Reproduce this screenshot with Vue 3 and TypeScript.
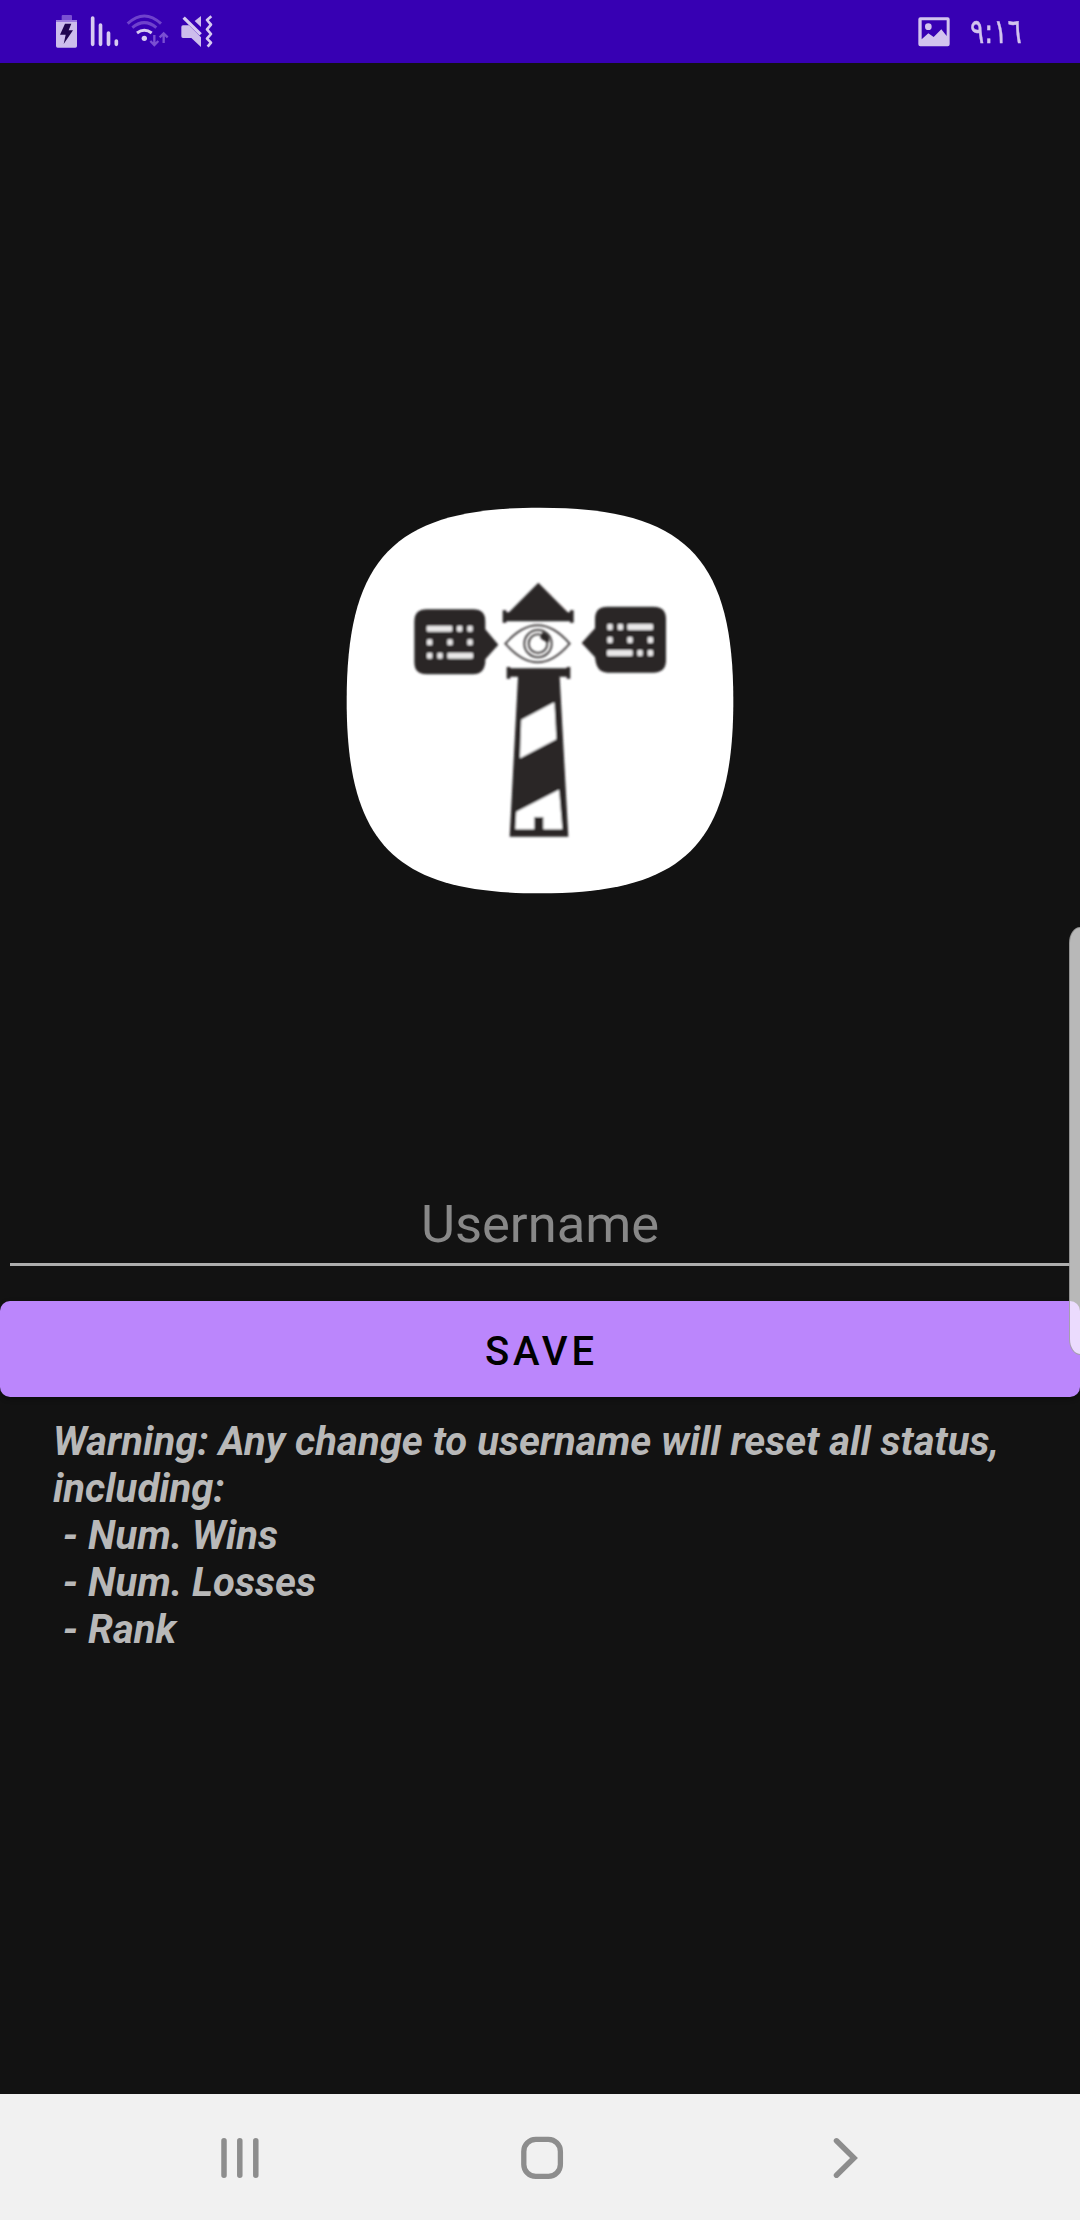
<script setup lang="ts">
const time: string = '٩:١٦'
const hint: string = 'Username'
const saveLabel: string = 'Save'
const warning: string[] = [
  'Warning: Any change to username will reset all status,',
  'including:',
  ' - Num. Wins',
  ' - Num. Losses',
  ' - Rank',
]

interface Mark { x: number; y: number; w: number }
const leftMarks: Mark[] = [
  { x: 275, y: 392, w: 77 }, { x: 366, y: 392, w: 16 }, { x: 397, y: 392, w: 16 },
  { x: 276, y: 433, w: 16 }, { x: 337, y: 433, w: 16 }, { x: 397, y: 433, w: 16 },
  { x: 276, y: 473, w: 16 }, { x: 307, y: 473, w: 16 }, { x: 337, y: 473, w: 77 },
]
const rightMarks: Mark[] = [
  { x: 817, y: 387, w: 16 }, { x: 848, y: 387, w: 16 }, { x: 877, y: 387, w: 77 },
  { x: 817, y: 426, w: 16 }, { x: 877, y: 426, w: 16 }, { x: 938, y: 426, w: 16 },
  { x: 816, y: 465, w: 77 }, { x: 907, y: 465, w: 16 }, { x: 938, y: 465, w: 16 },
]
</script>

<template>
  <div class="screen">
    <header class="status">
      <svg class="status-left" viewBox="0 0 570 189" width="190" height="63">
        <rect x="65" y="45" width="31" height="18" rx="3" fill="#7a4fd2" />
        <rect x="48" y="60" width="63" height="6" fill="#9b7bde" />
        <path d="M48 66h63v72q0 5-5 5H53q-5 0-5-5z" fill="#cdbdec" />
        <path d="M75 71h19l-8 20h13l-28 41 6-28H60z" fill="#21064f" />
        <g stroke="#d7caf1" stroke-width="11" stroke-linecap="round">
          <path d="M158 54v79M181.500 75v58M205.500 99v34M229 123v10" />
        </g>
        <g fill="none" stroke-width="9" stroke-linecap="butt">
          <path d="M263 71Q313 25 363 71" stroke="#6f42cc" />
          <path d="M277 83Q313 53 349 83" stroke="#6f42cc" />
          <path d="M291 99Q313 82 335 99" stroke="#d7caf1" />
        </g>
        <circle cx="313" cy="115" r="8" fill="#d7caf1" />
        <g fill="none" stroke="#7a4fd2" stroke-width="7">
          <path d="M343 105v29M331 123l12 12 12-12M371 129v-28M359 112l12-12 12 12" />
        </g>
        <path d="M424 81q0-5 5-5h18l36 36v29l-29-27h-25q-5 0-5-5z" fill="#cdbdec" />
        <path d="M431 53l51 50" stroke="#d7caf1" stroke-width="10" />
        <path d="M483 48v33l-19-18z" fill="#cdbdec" />
        <path d="M514 49l-13 11 12 14-12 14 12 14-12 14 12 12-10 12" fill="none" stroke="#d7caf1" stroke-width="8" stroke-linejoin="round" />
      </svg>
      <div class="status-right">
        <svg viewBox="0 0 96 90" width="32" height="30">
          <path fill-rule="evenodd" d="M7 1h82q6 0 6 6v75q0 6-6 6H7q-6 0-6-6V7q0-6 6-6zM11 10v57l20-18 16 11 23-23 16 20V10z" fill="#d2c3ee" />
          <circle cx="31" cy="29" r="10" fill="#d2c3ee" />
        </svg>
        <span class="time">{{ time }}</span>
      </div>
    </header>

    <main class="content">
      <svg class="logo" viewBox="0 0 1230 1230" width="410" height="410">
        <defs>
          <filter id="soft" x="-5%" y="-5%" width="110%" height="110%">
            <feGaussianBlur stdDeviation="3.2" />
          </filter>
        </defs>
        <path d="M615 38C1048 38 1195 185 1195 617C1195 1048 1048 1195 615 1195C182 1195 35 1048 35 617C35 185 182 38 615 38Z" fill="#fff" />
        <g filter="url(#soft)" fill="#292526">
          <path d="M610 263L698 352H705V346H716V383H705V379H514V383H503V346H514V352H522Z" />
          <path d="M515 516H526V520H695V516H706V551H695V545H674L700 1025H524L549 545H526V551H515Z" />
          <path d="M559 674L658 622L664 733L555 790Z" fill="#fff" />
          <path d="M544 950L672 884L682 1003H625V966H598V1003H541Z" fill="#fff" />
          <path d="M275 343H415Q451 343 451 379V403L490 449L451 493V502Q447 538 415 538H275Q238 538 238 502V379Q238 343 275 343Z" />
          <path d="M817 335H955Q993 335 993 372V496Q993 533 955 533H817Q784 533 780 487L740 444L780 400V372Q780 335 817 335Z" />
          <g fill="#e9e7e8">
            <rect v-for="(m, i) in leftMarks" :key="'l' + i" :x="m.x" :y="m.y" :width="m.w" height="18" rx="4" />
            <rect v-for="(m, i) in rightMarks" :key="'r' + i" :x="m.x" :y="m.y" :width="m.w" height="18" rx="4" />
          </g>
          <g fill="none" stroke="#4a4647" stroke-width="6">
            <path d="M511 446Q560 391 608 391Q656 391 704 446Q656 502 608 502Q560 502 511 446Z" />
            <circle cx="609" cy="446" r="41" />
            <circle cx="609" cy="446" r="28" />
          </g>
          <path d="M624 410Q645 418 643 440Q626 442 615 427Z" />
        </g>
      </svg>

      <div class="field"><span>{{ hint }}</span></div>
      <button class="save" type="button">{{ saveLabel }}</button>
      <p class="warning">{{ warning.join('\n') }}</p>
    </main>

    <nav class="navbar">
      <svg viewBox="0 0 1080 126" width="1080" height="126" fill="none" stroke="#8d8d8d">
        <path d="M224 46.800v34.400M239.800 46.800v34.400M255.800 46.800v34.400" stroke-width="5.500" stroke-linecap="round" />
        <rect x="523.800" y="45.400" width="36.600" height="37" rx="12" stroke-width="5.300" />
        <path d="M836.500 46.800L854 64L836.500 81.200" stroke-width="5.500" stroke-linecap="round" />
      </svg>
    </nav>

    <div class="edge-handle"></div>
  </div>
</template>

<style>
body {
  background: #121212;
}
</style>

<style scoped>
.screen {
  position: relative;
  display: flex;
  flex-direction: column;
  width: 1080px;
  height: 2220px;
  overflow: hidden;
  background: #121212;
  font-family: Roboto, "Liberation Sans", sans-serif;
}
.status {
  display: flex;
  justify-content: space-between;
  flex: none;
  height: 63px;
  background: #3700b3;
}
.status-left {
  margin-left: 40px;
}
.status-right {
  display: flex;
  align-items: center;
  gap: 20px;
  width: 162px;
}
.time {
  color: #d2c3ee;
  font: 34px/61px "DejaVu Sans Condensed", "DejaVu Sans", sans-serif;
  letter-spacing: -1.4px;
  white-space: nowrap;
  transform: scaleX(0.87);
  transform-origin: left center;
  -webkit-text-stroke: 0.4px #d2c3ee;
}
.content {
  display: flex;
  flex: 1;
  flex-direction: column;
}
.logo {
  display: block;
  align-self: center;
  margin-top: 432px;
}
.field {
  box-sizing: border-box;
  height: 73px;
  margin: 288px 10px 0;
  border-bottom: 3px solid #adadad;
  color: #888;
  font-size: 52.5px;
  line-height: 63px;
  text-align: center;
}
.save {
  height: 96px;
  margin-top: 35px;
  padding: 4px 0 0 3px;
  border: 0;
  border-radius: 10px;
  background: #bb86fc;
  box-shadow: 0 2px 5px rgba(0, 0, 0, 0.4);
  color: #000;
  font: 500 40px Roboto, sans-serif;
  letter-spacing: 0.0975em;
  text-transform: uppercase;
}
.warning {
  margin: 21px 53px 0;
  color: #b8b8b8;
  font-size: 40px;
  font-style: italic;
  font-weight: 700;
  letter-spacing: 0.03px;
  line-height: 47px;
  white-space: pre;
}
.navbar {
  flex: none;
  height: 126px;
  background: #f1f1f1;
}
.navbar svg {
  display: block;
}
.edge-handle {
  position: absolute;
  top: 927px;
  right: 0;
  box-sizing: border-box;
  width: 11px;
  height: 428px;
  border: 1px solid rgba(120, 120, 120, 0.6);
  border-right: 0;
  border-radius: 11px 0 0 11px / 16px 0 0 16px;
  background: rgba(255, 255, 255, 0.7);
}
</style>
